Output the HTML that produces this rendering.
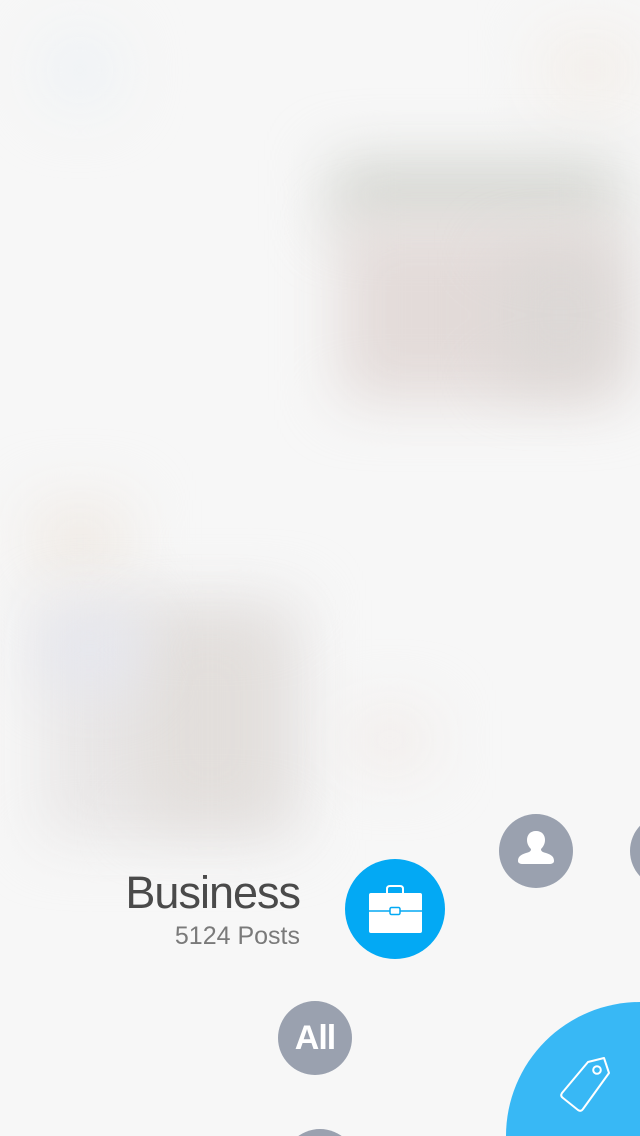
<!DOCTYPE html>
<html style="width:640px;height:1136px;overflow:hidden"><head><style>
html,body{margin:0;padding:0;}
body{width:640px;height:1136px;overflow:hidden;background:#f7f7f7;font-family:"Liberation Sans",sans-serif;}
#w{position:relative;width:640px;height:1136px;overflow:hidden;}
.b{position:absolute;filter:blur(30px);}
.c{position:absolute;border-radius:50%;}
</style></head><body><div id="w">
<div class="b" style="left:40px;top:30px;width:80px;height:80px;background:#eef2f5;border-radius:40%"></div>
<div class="b" style="left:540px;top:30px;width:100px;height:80px;background:#f3efeb"></div>
<div class="b" style="left:330px;top:160px;width:290px;height:70px;background:#d5d7d2"></div>
<div class="b" style="left:340px;top:220px;width:280px;height:180px;background:#e3dbd9"></div>
<div class="b" style="left:500px;top:250px;width:120px;height:130px;background:#dcd8d6"></div>
<div class="b" style="left:30px;top:500px;width:100px;height:80px;background:#f0ebe6"></div>
<div class="b" style="left:40px;top:600px;width:260px;height:240px;background:#e9e7e7"></div>
<div class="b" style="left:140px;top:620px;width:140px;height:200px;background:#e2dedb"></div>
<div class="b" style="left:40px;top:610px;width:100px;height:80px;background:#e6e7ee"></div>
<div class="b" style="left:350px;top:710px;width:80px;height:60px;background:#f1ecea"></div>

<div style="position:absolute;right:340px;top:867px;font-size:45px;color:#4a4a4a;letter-spacing:-1px;line-height:52px;">Business</div>
<div style="position:absolute;right:340px;top:921px;font-size:25px;color:#7a7a7a;line-height:30px;">5124 Posts</div>

<div class="c" style="left:345px;top:859px;width:100px;height:100px;background:#03a9f4;"></div>
<svg style="position:absolute;left:345px;top:859px" width="100" height="100" viewBox="0 0 100 100">
<path d="M42 34 v-4 q0-3 3-3 h10 q3 0 3 3 v4" fill="none" stroke="#fff" stroke-width="2"/>
<rect x="24" y="34" width="53" height="40" rx="2" fill="#fff"/>
<line x1="24" y1="52" x2="77" y2="52" stroke="#03a9f4" stroke-width="1.5"/>
<rect x="45" y="48.5" width="10" height="7" rx="1.5" fill="#fff" stroke="#03a9f4" stroke-width="1.5"/>
</svg>

<div class="c" style="left:499px;top:814px;width:74px;height:74px;background:#9aa1af;"></div>
<svg style="position:absolute;left:499px;top:814px" width="74" height="74" viewBox="0 0 74 74">
<path d="M37 17 c6 0 9 4 9 9 c0 4 -2 7 -4 9 c0 2 1 3 5 4 c6 2 8 4 8 8 c0 2 -2 3 -5 3 h-26 c-3 0 -5 -1 -5 -3 c0 -4 2 -6 8 -8 c4 -1 5 -2 5 -4 c-2 -2 -4 -5 -4 -9 c0 -5 3 -9 9 -9z" fill="#fff"/>
</svg>
<div class="c" style="left:630px;top:814px;width:74px;height:74px;background:#9aa1af;"></div>

<div class="c" style="left:278px;top:1001px;width:74px;height:74px;background:#9aa1af;color:#fff;font-size:34px;font-weight:bold;text-align:center;line-height:74px;letter-spacing:-1px;">All</div>
<div class="c" style="left:283px;top:1129px;width:74px;height:74px;background:#9aa1af;"></div>

<div class="c" style="left:506px;top:1002px;width:268px;height:268px;background:#38b8f5;"></div>
<svg style="position:absolute;left:550px;top:1050px" width="70" height="70" viewBox="0 0 70 70">
<path d="M12 43 L38 12 L54 8 L59 23 L33 59 Q31 62 28 60 L13 48 Q10 46 12 43Z" fill="none" stroke="#fff" stroke-width="2" stroke-linejoin="round"/>
<circle cx="47" cy="20" r="3.8" fill="none" stroke="#fff" stroke-width="2"/>
</svg>
</div></body></html>
